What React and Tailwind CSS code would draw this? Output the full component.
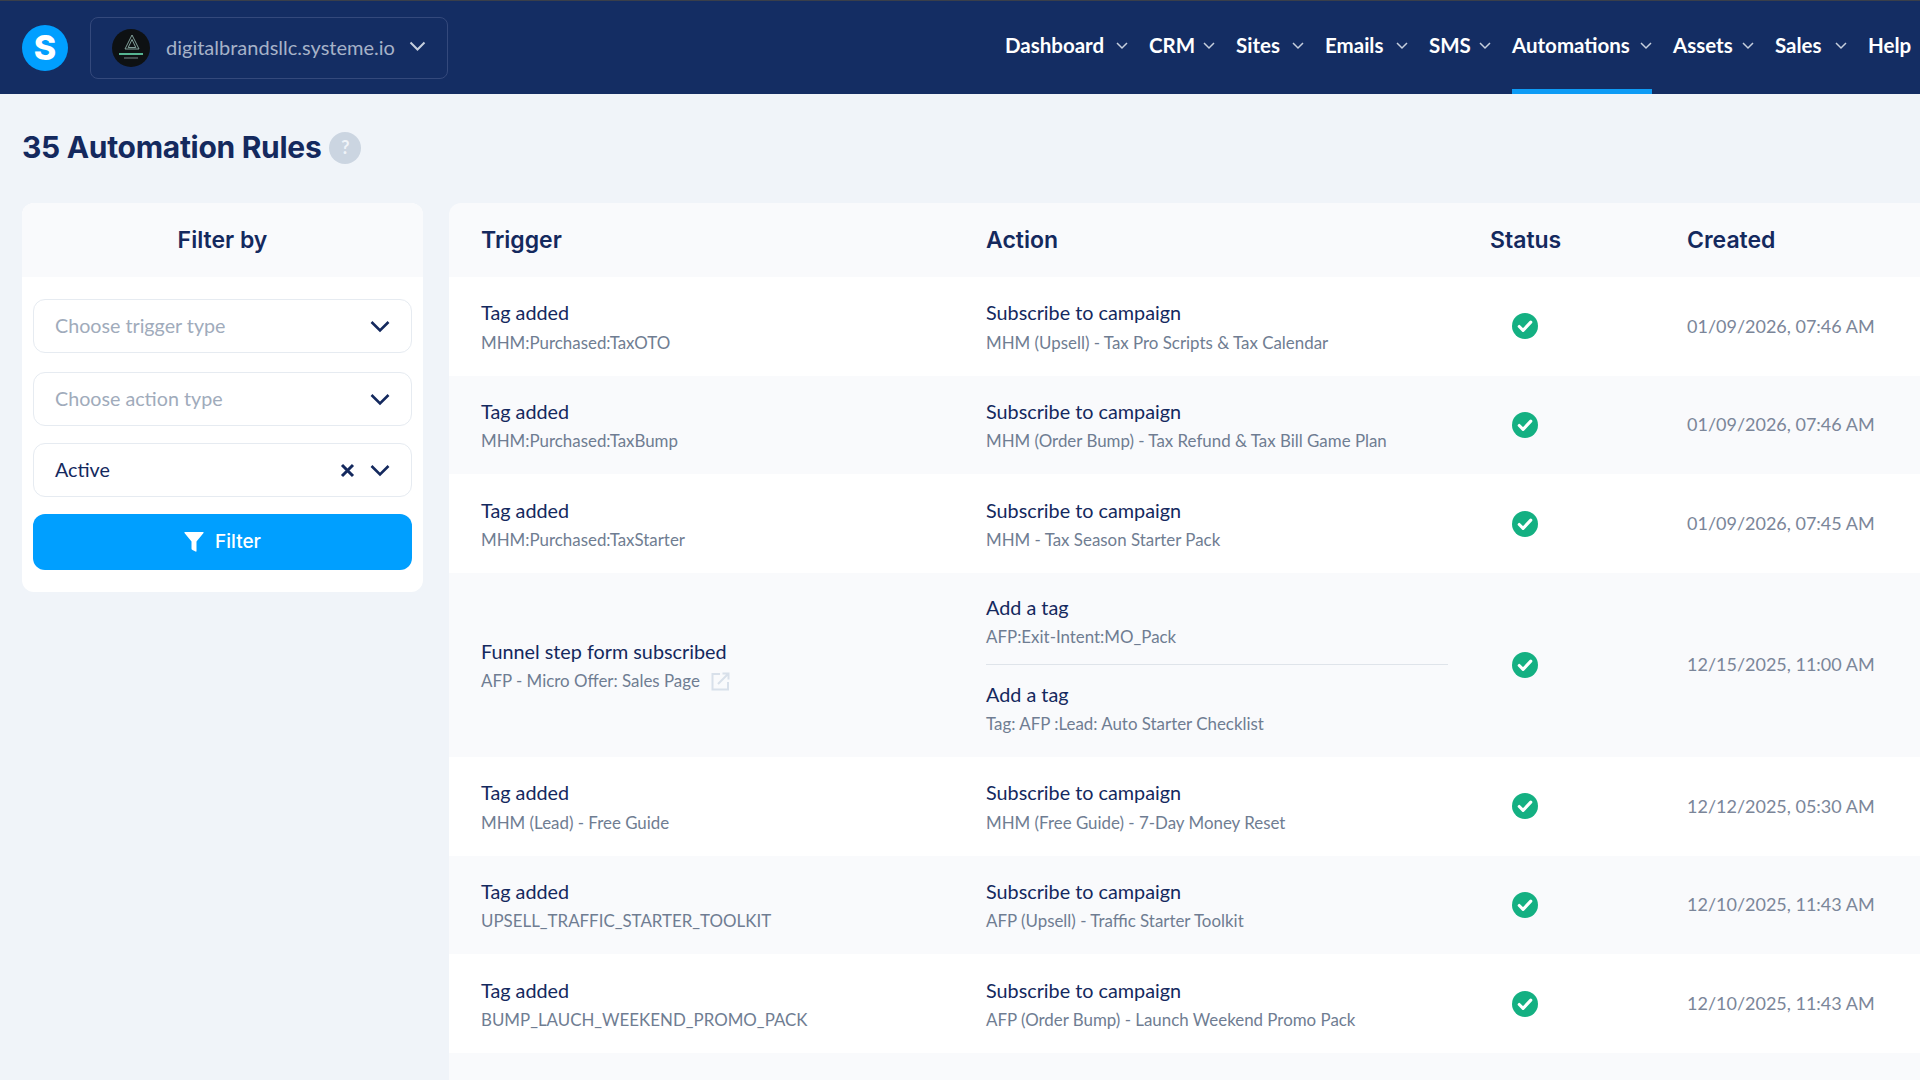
const NAV_ITEMS = [
  { label: 'Dashboard', width: 'w-[123px]', menu: true },
  { label: 'CRM', width: 'w-[66px]', menu: true },
  { label: 'Sites', width: 'w-[68px]', menu: true },
  { label: 'Emails', width: 'w-[83px]', menu: true },
  { label: 'SMS', width: 'w-[62px]', menu: true },
  { label: 'Automations', width: 'w-[140px]', menu: true, active: true },
  { label: 'Assets', width: 'w-[81px]', menu: true },
  { label: 'Sales', width: 'w-[72px]', menu: true },
  { label: 'Help', width: 'w-[42px]' },
]

const RULES = [
  { trigger: 'Tag added', detail: 'MHM:Purchased:TaxOTO', actions: [['Subscribe to campaign', 'MHM (Upsell) - Tax Pro Scripts & Tax Calendar']], created: '01/09/2026, 07:46 AM' },
  { trigger: 'Tag added', detail: 'MHM:Purchased:TaxBump', actions: [['Subscribe to campaign', 'MHM (Order Bump) - Tax Refund & Tax Bill Game Plan']], created: '01/09/2026, 07:46 AM' },
  { trigger: 'Tag added', detail: 'MHM:Purchased:TaxStarter', actions: [['Subscribe to campaign', 'MHM - Tax Season Starter Pack']], created: '01/09/2026, 07:45 AM' },
  { trigger: 'Funnel step form subscribed', detail: 'AFP - Micro Offer: Sales Page', link: true, actions: [['Add a tag', 'AFP:Exit-Intent:MO_Pack'], ['Add a tag', 'Tag: AFP :Lead: Auto Starter Checklist']], created: '12/15/2025, 11:00 AM' },
  { trigger: 'Tag added', detail: 'MHM (Lead) - Free Guide', actions: [['Subscribe to campaign', 'MHM (Free Guide) - 7-Day Money Reset']], created: '12/12/2025, 05:30 AM' },
  { trigger: 'Tag added', detail: 'UPSELL_TRAFFIC_STARTER_TOOLKIT', actions: [['Subscribe to campaign', 'AFP (Upsell) - Traffic Starter Toolkit']], created: '12/10/2025, 11:43 AM' },
  { trigger: 'Tag added', detail: 'BUMP_LAUCH_WEEKEND_PROMO_PACK', actions: [['Subscribe to campaign', 'AFP (Order Bump) - Launch Weekend Promo Pack']], created: '12/10/2025, 11:43 AM' },
]

function StatusIcon() {
  return (
    <svg width="26" height="26" viewBox="0 0 27 27">
      <circle cx="13.5" cy="13.5" r="13.5" fill="#14b082" />
      <path d="M7.5 14l4 4 8-8.5" fill="none" stroke="#fff" strokeWidth="3.2" strokeLinecap="round" strokeLinejoin="round" />
    </svg>
  )
}

function LinkIcon() {
  return (
    <svg width="19" height="19" viewBox="0 0 19 19" fill="none" stroke="#d8e0ea" strokeWidth="2">
      <path d="M9 2H1.5v15.5H17V10" />
      <path d="M17 2L7 12M11.5 1.5H17.5V7.5" />
    </svg>
  )
}

function Avatar() {
  return (
    <svg width="38" height="38" viewBox="0 0 38 38" className="shrink-0">
      <circle cx="19" cy="19" r="19" fill="#0e1113" />
      <path d="M20 6L13 20h14zM20 10.5l-3.8 8h7.6z" fill="none" stroke="#8fb0a8" strokeWidth="0.9" />
      <path d="M7 25h24" stroke="#5fc8a0" strokeWidth="1.8" />
      <path d="M12 29h14" stroke="#7b8a8a" strokeWidth="1" />
    </svg>
  )
}

function SmallChevron() {
  return (
    <svg width="12" height="8" viewBox="0 0 12 8" fill="none" stroke="#c6cfdd" strokeWidth="1.5" className="mb-[4px] shrink-0">
      <path d="M1 1l5 5 5-5" />
    </svg>
  )
}

function SelectBox({ label, value, className }) {
  return (
    <div className={`flex h-[54px] items-center rounded-xl border border-[#e6ebf1] bg-white pl-[21px] pr-[21px] ${className}`}>
      <span className={`flex-1 text-[19.7px] ${value ? 'text-[#14295e]' : 'text-[#a0abbb]'}`}>{label}</span>
      {value && (
        <svg width="15" height="15" viewBox="0 0 15 15" stroke="#14295e" strokeWidth="3" className="mr-[15px]">
          <path d="M2 2l11 11M13 2L2 13" />
        </svg>
      )}
      <svg width="20" height="13" viewBox="0 0 20 13" fill="none" stroke="#14295e" strokeWidth="2.6">
        <path d="M1.5 2l8.5 8.5L18.5 2" />
      </svg>
    </div>
  )
}

export default function App() {
  return (
    <div className="h-[1080px] overflow-hidden bg-[#f0f4f9] font-['Lato',sans-serif] text-[#14295e]">
      {/* top bar */}
      <header className="flex h-[94px] items-center border-t border-[#3a3f4a] bg-[#142d63] pl-[22px] pr-[10px]">
        <div className="flex h-[46px] w-[46px] items-center justify-center rounded-full bg-[#009fff] font-['Inter',sans-serif] text-[34px] font-extrabold text-white">S</div>
        <div className="ml-[22px] flex h-[62px] w-[358px] items-center rounded-lg border border-[#34497c] pl-[21px]">
          <Avatar />
          <span className="mb-[2px] ml-[16px] w-[243px] text-[20px] text-[#a6b2c8]">digitalbrandsllc.systeme.io</span>
          <svg width="17" height="11" viewBox="0 0 17 11" fill="none" stroke="#c6cfdd" strokeWidth="2" className="mb-[2px]">
            <path d="M1.5 1.5l7 7 7-7" />
          </svg>
        </div>
        <nav className="ml-auto flex h-full gap-[21px]">
          {NAV_ITEMS.map(item => (
            <div key={item.label} className={`flex items-center justify-between border-y-[5px] border-t-transparent text-[20.5px] font-bold text-white ${item.width} ${item.active ? 'border-b-[#0d9bf5]' : 'border-b-transparent'}`}>
              <span className="mb-[4px]">{item.label}</span>
              {item.menu && <SmallChevron />}
            </div>
          ))}
        </nav>
      </header>

      <main className="px-[22px]">
        <div className="flex h-[109px] items-center gap-[8px] pb-[2px]">
          <h1 className="font-['Inter',sans-serif] text-[30px] font-bold tracking-[-0.3px]">35 Automation Rules</h1>
          <span className="flex h-[32px] w-[32px] items-center justify-center rounded-full bg-[#cbd5e1] text-[18px] font-bold text-[#f0f4f9]">?</span>
        </div>

        <div className="mr-[-22px] flex items-start gap-[26px]">
          {/* filter panel */}
          <aside className="w-[401px] shrink-0 overflow-hidden rounded-xl bg-white">
            <div className="flex h-[74px] items-center justify-center bg-[#f9fafc] font-['Inter',sans-serif] text-[23px] font-semibold">Filter by</div>
            <div className="flex flex-col px-[11px] py-[22px]">
              <SelectBox label="Choose trigger type" />
              <SelectBox label="Choose action type" className="mt-[19px]" />
              <SelectBox label="Active" value className="mt-[17px]" />
              <button className="mt-[17px] flex h-[56px] items-center justify-center gap-[11px] rounded-xl bg-[#009fff] font-['Inter',sans-serif] text-[19px] font-medium text-white">
                <svg width="20" height="20" viewBox="0 0 20 20" fill="#fff">
                  <path d="M1 0h18q1 0 .5 1L12.5 9.5V19q0 1-1 .5l-3-1.5q-1-.5-1-1.5V9.5L.5 1Q0 0 1 0z" />
                </svg>
                Filter
              </button>
            </div>
          </aside>

          {/* rules table */}
          <section className="flex-1 overflow-hidden rounded-tl-xl">
            <div className="grid h-[74px] grid-cols-[505px_504px_197px_1fr] items-center bg-[#f9fafc] pl-[32px] font-['Inter',sans-serif] text-[23px] font-semibold">
              <div>Trigger</div>
              <div>Action</div>
              <div>Status</div>
              <div>Created</div>
            </div>
            {RULES.map((rule, i) => (
              <div key={i} className={`grid grid-cols-[505px_504px_197px_1fr] items-center pl-[32px] ${i % 2 ? 'bg-[#f9fafc]' : 'bg-white'}`}>
                <div className="pt-[3px]">
                  <div className="text-[19.8px] leading-[29.5px]">{rule.trigger}</div>
                  <div className="flex items-center gap-[11px] text-[16.9px] leading-[29.5px] text-[#6f7d92]">
                    {rule.detail}
                    {rule.link && <LinkIcon />}
                  </div>
                </div>
                <div className="w-[462px] divide-y divide-[#dfe4ea]">
                  {rule.actions.map((a, j) => (
                    <div key={j} className={rule.actions.length === 1 ? 'flex h-[98.67px] flex-col justify-center pt-[3px]' : j === 0 ? 'flex h-[92px] flex-col justify-center pt-[8px]' : 'flex h-[92px] flex-col justify-center pb-[3px]'}>
                      <div className="text-[19.8px] leading-[29.5px]">{a[0]}</div>
                      <div className="text-[16.9px] leading-[29.5px] text-[#6f7d92]">{a[1]}</div>
                    </div>
                  ))}
                </div>
                <div className="flex w-[70px] justify-center"><StatusIcon /></div>
                <div className="text-[18px] text-[#7b8699]">{rule.created}</div>
              </div>
            ))}
            <div className="h-[40px] bg-[#f9fafc]" />
          </section>
        </div>
      </main>
    </div>
  )
}
